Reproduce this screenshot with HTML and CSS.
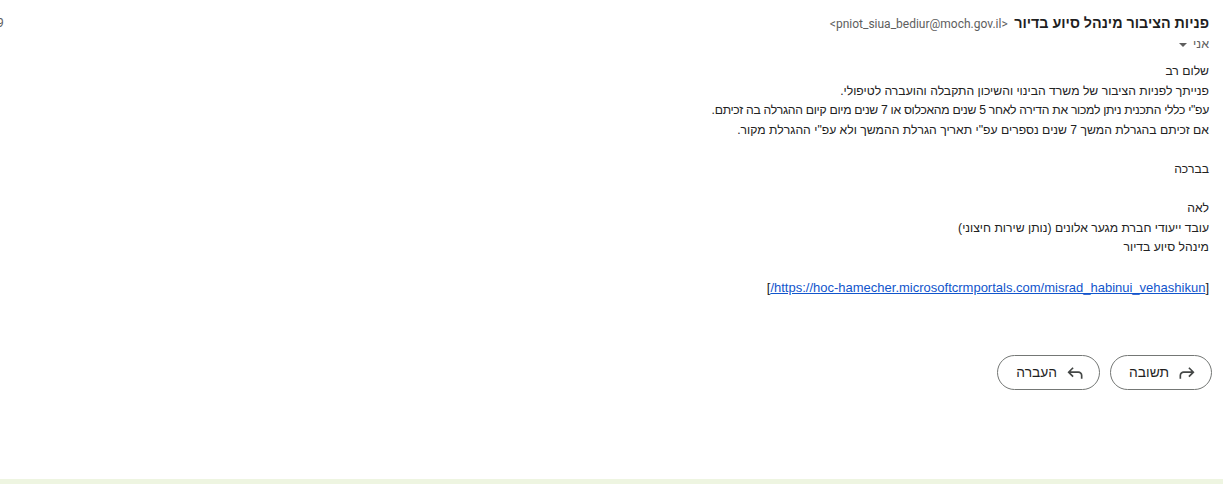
FILE: index.html
```html
<!DOCTYPE html>
<html lang="he" dir="rtl">
<head>
    <meta charset="UTF-8">
    <title>פניות הציבור מינהל סיוע בדיור</title>
    <link rel="stylesheet" href="styles.css">
</head>
<body>

<div class="mail">

    <div class="header">
        <div class="from">
            <span class="name">פניות הציבור מינהל סיוע בדיור</span>
            <span class="address">&lt;pniot_siua_bediur@moch.gov.il&gt;</span>
        </div>
        <span class="date">9</span>
    </div>
    <div class="to">אני <span class="caret"></span></div>

    <div class="body">
        <div>שלום רב</div>
        <div>פנייתך לפניות הציבור של משרד הבינוי והשיכון התקבלה והועברה לטיפולי.</div>
        <div class="tight">עפ"י כללי התכנית ניתן למכור את הדירה לאחר 5 שנים מהאכלוס או 7 שנים מיום קיום ההגרלה בה זכיתם.</div>
        <div>אם זכיתם בהגרלת המשך 7 שנים נספרים עפ"י תאריך הגרלת ההמשך ולא עפ"י ההגרלת מקור.</div>
        <div class="gap"></div>
        <div>בברכה</div>
        <div class="gap"></div>
        <div>לאה</div>
        <div>עובד ייעודי חברת מגער אלונים (נותן שירות חיצוני)</div>
        <div>מינהל סיוע בדיור</div>
        <div class="gap"></div>
        <div class="link">[<a href="#">https://hoc-hamecher.microsoftcrmportals.com/misrad_habinui_vehashikun/</a>]</div>
    </div>

    <div class="actions">
        <button class="pill">
            <svg viewBox="0 -960 960 960" class="flip"><path d="M760-200v-160q0-50-35-85t-85-35H273l144 144-57 56-240-240 240-240 57 56-144 144h367q83 0 141.5 58.5T840-360v160h-80Z"/></svg>
            תשובה
        </button>
        <button class="pill">
            <svg viewBox="0 -960 960 960" class="flip"><path d="M120-200v-160q0-83 58.5-141.5T320-560h367L543-704l57-56 240 240-240 240-57-56 144-144H320q-50 0-85 35t-35 85v160h-80Z"/></svg>
            העברה
        </button>
    </div>

</div>

<div class="footer"></div>

</body>
</html>
```

FILE: styles.css
```css
html, body {
    margin: 0;
    height: 484px;
    overflow: hidden;
    background: #fff;
}
body {
    position: relative;
    font-family: "Liberation Sans", Arial, sans-serif;
    color: #222;
}
.mail {
    padding: 13px 14px 0 0;
}
.header {
    display: flex;
    justify-content: space-between;
    align-items: center;
    height: 20px;
}
.name {
    font-size: 14.3px;
    font-weight: bold;
    color: #1f1f1f;
}
.address {
    font-family: Roboto, "Liberation Sans", sans-serif;
    font-size: 12px;
    color: #5e5e5e;
    margin-right: 2px;
}
.date {
    font-family: Roboto, sans-serif;
    font-size: 12px;
    color: #5e5e5e;
    margin-left: -3px;
}
.to {
    font-size: 12.5px;
    color: #5e5e5e;
    line-height: 20px;
    margin-top: 1px;
}
.caret {
    display: inline-block;
    width: 0;
    height: 0;
    border-left: 4px solid transparent;
    border-right: 4px solid transparent;
    border-top: 4px solid #5e5e5e;
    margin-right: 3px;
    vertical-align: middle;
}
.body {
    font-size: 12.2px;
    line-height: 19.6px;
    margin-top: 8px;
}
.tight {
    letter-spacing: -0.3px;
}
.gap {
    height: 19.6px;
}
.link {
    font-size: 13px;
}
.body a {
    color: #1155cc;
}
.actions {
    display: flex;
    gap: 10px;
    margin-top: 58px;
    margin-right: -3px;
}
.pill {
    display: flex;
    align-items: center;
    gap: 8px;
    height: 35px;
    padding: 0 14px 0 18px;
    border: 1px solid #747775;
    border-radius: 18px;
    background: #fff;
    color: #1f1f1f;
    font-family: "Liberation Sans", Arial, sans-serif;
    font-size: 13.8px;
    cursor: pointer;
}
.pill svg {
    width: 20px;
    height: 20px;
    fill: #444746;
}
.flip {
    transform: scaleX(-1);
}
.footer {
    position: absolute;
    left: 0;
    right: 0;
    bottom: 0;
    height: 5px;
    background: #eef5e1;
}
```
